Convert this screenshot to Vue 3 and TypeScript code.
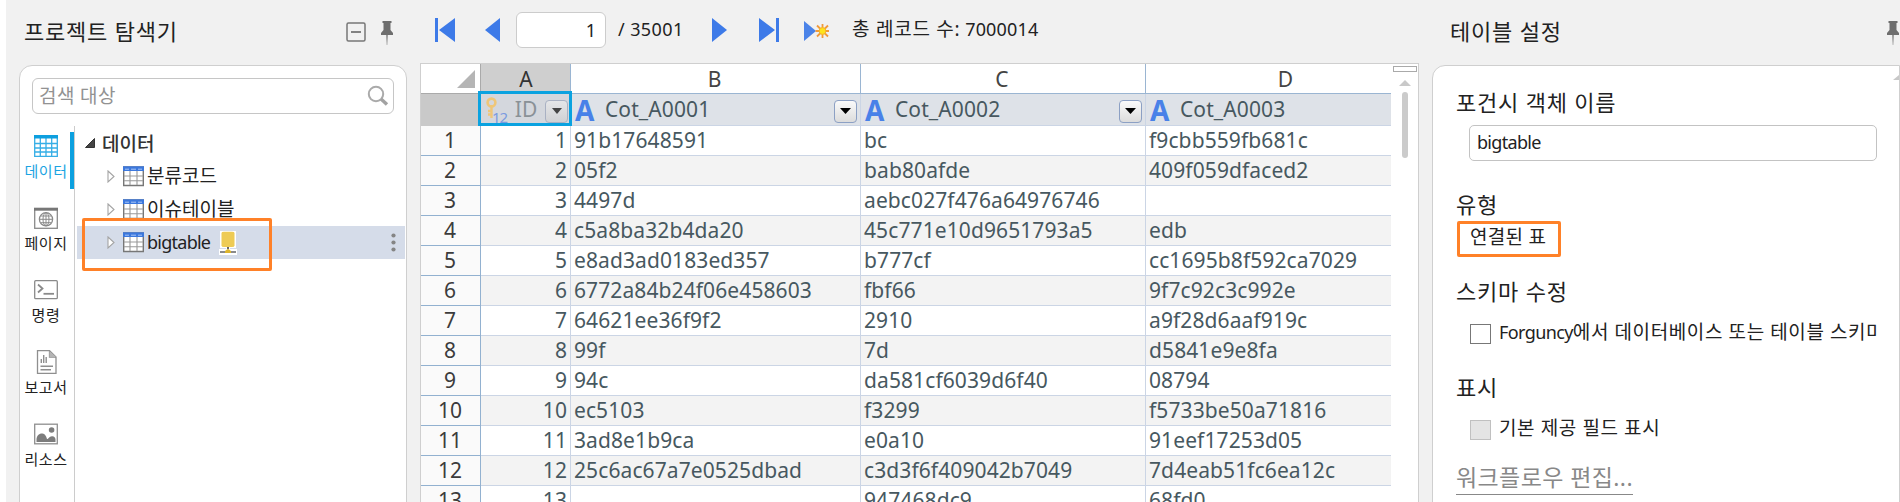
<script setup lang="ts">
interface NavItem { key: string; label: string }
interface TreeItem { name: string; linked: boolean; latin: boolean }
interface GridRow { n: number; b: string; c: string; d: string }

const navItems: NavItem[] = [
  { key: 'data', label: '데이터' },
  { key: 'page', label: '페이지' },
  { key: 'command', label: '명령' },
  { key: 'report', label: '보고서' },
  { key: 'resource', label: '리소스' },
]

const treeItems: TreeItem[] = [
  { name: '분류코드', linked: false, latin: false },
  { name: '이슈테이블', linked: false, latin: false },
  { name: 'bigtable', linked: true, latin: true },
]

const fields: string[] = ['Cot_A0001', 'Cot_A0002', 'Cot_A0003']

const cells: [string, string, string][] = [
  ['91b17648591', 'bc', 'f9cbb559fb681c'],
  ['05f2', 'bab80afde', '409f059dfaced2'],
  ['4497d', 'aebc027f476a64976746', ''],
  ['c5a8ba32b4da20', '45c771e10d9651793a5', 'edb'],
  ['e8ad3ad0183ed357', 'b777cf', 'cc1695b8f592ca7029'],
  ['6772a84b24f06e458603', 'fbf66', '9f7c92c3c992e'],
  ['64621ee36f9f2', '2910', 'a9f28d6aaf919c'],
  ['99f', '7d', 'd5841e9e8fa'],
  ['94c', 'da581cf6039d6f40', '08794'],
  ['ec5103', 'f3299', 'f5733be50a71816'],
  ['3ad8e1b9ca', 'e0a10', '91eef17253d05'],
  ['25c6ac67a7e0525dbad', 'c3d3f6f409042b7049', '7d4eab51fc6ea12c'],
  ['', '947468dc9', '68fd0'],
]
const rows: GridRow[] = cells.map(([b, c, d], i) => ({ n: i + 1, b, c, d }))
</script>

<template>
  <div class="app">
    <aside class="explorer">
      <header class="panel-head">
        <h2>프로젝트 탐색기</h2>
        <svg class="collapse" width="20" height="20" viewBox="0 0 20 20"><rect x="1" y="1" width="18" height="18" rx="1.5" fill="none" stroke="#777" stroke-width="1.5" /><path d="M5 10H15" stroke="#666" stroke-width="1.6" /></svg>
        <svg class="pin" width="12" height="24" viewBox="0 0 12 24"><path d="M1.5 0H10.5V2H9.5V9L12 12V14H0V12L2.5 9V2H1.5Z" fill="#6e6e6e" /><path d="M5 14H7L6.3 24H5.7Z" fill="#999" /></svg>
      </header>
      <div class="explorer-card">
        <div class="search">
          <span>검색 대상</span>
          <svg width="22" height="22" viewBox="0 0 22 22" fill="none"><circle cx="9" cy="9" r="7.2" stroke="#aaa" stroke-width="2" /><path d="M14 14L20 19.5" stroke="#a2a2a2" stroke-width="3.4" /></svg>
        </div>
        <div class="explorer-body">
          <nav class="nav">
            <div v-for="item in navItems" :key="item.key" class="nav-item" :class="{ active: item.key === 'data' }">
              <svg width="24" height="24" viewBox="0 0 24 24" fill="none">
                <g v-if="item.key === 'data'">
                  <path d="M.7 2H23.3V22.3H.7ZM6.3 4V22M12 4V22M17.7 4V22M1 9.5H23M1 14H23M1 18H23" stroke="#35aee6" stroke-width="1.3" />
                  <path d="M0 1H24V4.5H0Z" fill="#0d9fdf" />
                </g>
                <g v-else-if="item.key === 'page'" stroke="#8a8a8a">
                  <rect x=".7" y="2.7" width="22.6" height="19.6" stroke-width="1.3" />
                  <path d="M0 3.2H24" stroke-width="3" stroke="#777" />
                  <circle cx="12" cy="13.3" r="6.6" stroke-width="1.3" />
                  <ellipse cx="12" cy="13.3" rx="3" ry="6.6" />
                  <path d="M12 7V20M5.5 13.3H18.5M7 10H17M7 16.7H17" />
                </g>
                <g v-else-if="item.key === 'command'" stroke="#8a8a8a">
                  <rect x=".7" y="2.7" width="22.6" height="18" rx="1" stroke-width="1.3" />
                  <path d="M4 6.5L8.5 10.5L4 14.5" stroke-width="1.8" />
                  <path d="M9.5 15.8H20" stroke-width="1.8" />
                </g>
                <g v-else-if="item.key === 'report'" stroke="#8f8f8f">
                  <path d="M3.5.7H15.5L22 7V23.3H3.5ZM15.5.7V7H22" stroke-width="1.3" />
                  <path d="M15.5 1L22 7H15.5Z" fill="#b5b5b5" stroke="none" />
                  <path d="M7.3 13V9M9.7 13V5M12.2 13V7M6.5 16.3H19M6.5 19.8H17" stroke-width="1.4" />
                </g>
                <g v-else>
                  <rect x=".7" y="2.2" width="22.6" height="19.6" stroke="#8f8f8f" stroke-width="1.3" />
                  <circle cx="17.6" cy="8" r="2.8" fill="#7c7c7c" />
                  <path d="M2.5 20V17C3 13 6 11.3 8.5 11.6C11 12 12 14 13 17C14.5 17 15 14.5 18 14.2C20 14 21.5 15.5 21.5 17.5V20Z" fill="#7c7c7c" />
                </g>
              </svg>
              <span>{{ item.label }}</span>
            </div>
          </nav>
          <div class="tree">
            <div class="tree-root">
              <svg width="10" height="10" viewBox="0 0 10 10"><path d="M9.5 .5V9.5H.5Z" fill="#444" stroke="#333" /></svg>
              <strong>데이터</strong>
            </div>
            <div v-for="t in treeItems" :key="t.name" class="tree-row" :class="{ selected: t.linked }">
              <svg class="arrow" width="8" height="13" viewBox="0 0 8 13"><path d="M1 1L7 6.5L1 12Z" fill="#fff" stroke="#a4a4a4" stroke-width="1.1" /></svg>
              <svg class="table-icon" width="21" height="21" viewBox="0 0 21 21" fill="none">
                <path d="M.7 1H20.3V19.5H.7Z" fill="#fff" stroke="#777" stroke-width="1.4" />
                <path d="M7 5V19M14 5V19M1 10H20M1 14.7H20" stroke="#999" stroke-width="1.1" />
                <path d="M0 .3H21V5H0Z" fill="#3c78dd" /><path d="M2 3.2H6M8 3.2H13M15 3.2H19" stroke="#a9c6f5" />
              </svg>
              <span class="tree-name" :class="{ latin: t.latin }">{{ t.name }}</span>
              <svg v-if="t.linked" class="db" width="18" height="24" viewBox="0 0 18 24">
                <path d="M1 0H17V17H11V18H18V24H0V18H7V17H1Z" fill="#fff" />
                <path d="M2.5 2Q2.5 .7 5 .7H13Q15.500 .7 15.500 2V14.500Q15.500 16 13 16H5Q2.500 16 2.500 14.500Z" fill="#eecb55" />
                <path d="M8 16H10V18H8Z" fill="#666" /><path d="M1 21H6M12 21H17" stroke="#8a8a8a" stroke-width="2" /><path d="M6 22V20L9 17.800L12 20V22Z" fill="#ddb52e" />
              </svg>
              <svg v-if="t.linked" class="more" width="5" height="19" viewBox="0 0 5 19" fill="#858585"><circle cx="2.500" cy="2.500" r="2.100" /><circle cx="2.500" cy="9.500" r="2.100" /><circle cx="2.500" cy="16.500" r="2.100" /></svg>
              <i v-if="t.linked" class="mark tree-mark"></i>
            </div>
          </div>
        </div>
      </div>
    </aside>

    <main class="center">
      <div class="toolbar">
        <svg class="first" width="20" height="24" viewBox="0 0 20 24" fill="#3d7ae8"><path d="M0 0H3V24H0ZM20 0V24L4 12Z" /></svg>
        <svg class="prev" width="15" height="24" viewBox="0 0 15 24" fill="#3d7ae8"><path d="M15 0V24L0 12Z" /></svg>
        <div class="page-box">1</div>
        <span class="page-total">/ 35001</span>
        <svg class="next" width="15" height="24" viewBox="0 0 15 24" fill="#3d7ae8"><path d="M0 0V24L15 12Z" /></svg>
        <svg class="last" width="20" height="24" viewBox="0 0 20 24" fill="#3d7ae8"><path d="M0 0L16 12L0 24ZM17 0H20V24H17Z" /></svg>
        <svg class="new" width="26" height="20" viewBox="0 0 26 20">
          <path d="M0 0L12 10L0 20Z" fill="#4b83e8" />
          <path d="M18.500 3V17M11.500 10H25M13 4.500L24 15.500M24 4.500L13 15.500" stroke="#f29a3a" stroke-width="1.800" />
          <circle cx="18.500" cy="10" r="3.400" fill="#ffe41c" stroke="#f5b32c" />
        </svg>
        <span class="record-count"><span class="ko">총 레코드 수:</span> <span>7000014</span></span>
      </div>

      <div class="sheet">
        <div class="sheet-grid">
          <div class="line letters">
            <div class="rh"><svg width="18" height="18" viewBox="0 0 18 18"><path d="M18 0V18H0Z" fill="#b5b5b5" /></svg></div>
            <div class="ca sel">A</div><div class="cb">B</div><div class="cc">C</div><div class="cd">D</div>
          </div>
          <div class="line fields">
            <div class="rh"></div>
            <div class="ca id-cell">
              <svg class="key" width="20" height="28" viewBox="0 0 20 28" fill="none">
                <circle cx="5.500" cy="5.500" r="3.900" stroke="#efc678" stroke-width="2.600" />
                <path d="M5.500 9.500V21M5.500 14H2M5.500 17.500H2" stroke="#efc678" stroke-width="2.400" />
              </svg>
              <span class="twelve">12</span>
              <span class="id-name">ID</span>
              <span class="drop dim"><svg width="10" height="6" viewBox="0 0 10 6"><path d="M0 0H10L5 6Z" fill="#444" /></svg></span>
              <i class="cursor"></i>
            </div>
            <div v-for="(f, i) in fields" :key="f" :class="['cb', 'cc', 'cd'][i]">
              <b class="type">A</b><span class="field-name">{{ f }}</span>
              <span v-if="i < 2" class="drop"><svg width="11" height="6" viewBox="0 0 11 6"><path d="M0 0H11L5.500 6Z" fill="#000" /></svg></span>
            </div>
          </div>
          <div v-for="r in rows" :key="r.n" class="line data" :class="{ alt: r.n % 2 === 0 }">
            <div class="rh">{{ r.n }}</div>
            <div class="ca">{{ r.n }}</div>
            <div class="cb">{{ r.b }}</div>
            <div class="cc">{{ r.c }}</div>
            <div class="cd">{{ r.d }}</div>
          </div>
        </div>
        <div class="scroll">
          <i class="split"></i>
          <svg width="12" height="6" viewBox="0 0 12 6"><path d="M6 0L12 6H0Z" fill="#c9c9c9" /></svg>
          <i class="thumb"></i>
        </div>
      </div>
    </main>

    <aside class="settings">
      <header class="panel-head">
        <h2>테이블 설정</h2>
        <svg class="pin" width="12" height="24" viewBox="0 0 12 24"><path d="M1.500 0H10.500V2H9.500V9L12 12V14H0V12L2.500 9V2H1.500Z" fill="#6e6e6e" /><path d="M5 14H7L6.300 24H5.700Z" fill="#999" /></svg>
      </header>
      <div class="settings-card">
        <h3>포건시 객체 이름</h3>
        <div class="name-box">bigtable</div>
        <h3 class="kind">유형</h3>
        <div class="kind-value">연결된 표</div>
        <h3 class="schema">스키마 수정</h3>
        <div class="check"><i></i><span><span class="brand">Forguncy</span>에서 데이터베이스 또는 테이블 스키마 수정</span></div>
        <h3 class="display">표시</h3>
        <div class="check disabled"><i></i><span>기본 제공 필드 표시</span></div>
        <a class="workflow">워크플로우 편집...</a>
        <svg class="up" width="6" height="5" viewBox="0 0 6 5"><path d="M6 0V5H0Z" fill="#c8c8c8" /></svg>
      </div>
    </aside>
  </div>
</template>

<style>
body { margin: 0; overflow: hidden; background: #fff; }
</style>

<style scoped>
* { box-sizing: border-box; }
.app {
  width: 1900px; height: 502px; overflow: hidden; display: flex;
  background: #f1f1f1; border-left: 6px solid #fff;
  font-family: "Noto Sans", "Noto Sans CJK KR", sans-serif;
  color: #222; white-space: nowrap;
}
svg { display: block; flex: none; }
h2, h3 { margin: 0; font-weight: 400; font-size: 22px; letter-spacing: .8px; color: #222; }
.panel-head { height: 65px; display: flex; align-items: flex-start; }
.panel-head h2 { line-height: 30px; margin-top: 16px; }

.explorer { width: 414px; padding-left: 13px; flex: none; }
.explorer .panel-head { padding-left: 5px; }
.explorer .panel-head h2 { width: 322px; }
.collapse { margin-top: 22px; }
.explorer .pin { margin: 21px 0 0 15px; }
.explorer-card {
  width: 388px; height: 460px; background: #fff; border: 1px solid #cfcfcf;
  border-radius: 13px 13px 0 0;
}
.search {
  margin: 12px 0 0 12px; width: 362px; height: 36px; border: 1px solid #c6c6c6; border-radius: 6px;
  display: flex; align-items: center; justify-content: space-between; padding: 0 4px 0 6px;
  font-size: 19px; letter-spacing: .4px; color: #929292; line-height: 34px;
}
.explorer-body { display: flex; margin-top: 12px; }
.nav { width: 55px; height: 400px; border-right: 1px solid #ccc; padding-top: 6px; }
.nav-item {
  height: 57px; margin-bottom: 15px; display: flex; flex-direction: column; align-items: center;
  font-size: 15px; line-height: 20px; color: #222; padding: 1px 3px 0 0; letter-spacing: .6px;
}
.nav-item svg { margin-top: 1px; }
.nav-item span { margin-top: 3px; margin-left: 1px; }
.nav-item.active { color: #1ba4e2; border-right: 4px solid #0ca0df; padding-right: 0; padding-left: 1px; }
.tree { flex: 1; padding-left: 2px; }
.tree-root { height: 34px; display: flex; align-items: center; padding-left: 8px; line-height: 34px; }
.tree-root strong { font-weight: 500; font-size: 19px; margin-left: 7px; color: #333; font-family: "Noto Sans CJK KR", sans-serif; }
.tree-row { position: relative; width: 328px; height: 33px; display: flex; align-items: center; padding-left: 30px; }
.tree-row.selected { background: #d5dce9; }
.table-icon { margin-left: 8px; }
.tree-name { font-size: 19px; line-height: 33px; margin-left: 3px; color: #222; }
.tree-name.latin { font-size: 18px; letter-spacing: -.75px; }
.db { margin-left: 9px; }
.more { margin-left: auto; margin-right: 9px; }
.mark { position: absolute; border: 3px solid #ff8128; border-radius: 2px; }
.tree-mark { left: 5px; top: -8px; width: 190px; height: 53px; }

.center { width: 999px; flex: none; }
.toolbar { height: 63px; display: flex; align-items: flex-start; font-size: 18px; line-height: 30px; }
.toolbar .first { margin: 18px 0 0 15px; }
.toolbar .prev { margin: 18px 0 0 30px; }
.page-box {
  width: 90px; height: 36px; margin: 12px 0 0 16px; padding-right: 9px; background: #fff;
  border: 1px solid #ccc; border-radius: 6px; text-align: right; line-height: 35px;
}
.page-total { margin: 14px 0 0 12px; width: 94px; letter-spacing: .4px; }
.toolbar .next { margin-top: 18px; }
.toolbar .last { margin: 18px 0 0 32px; }
.toolbar .new { margin: 21px 0 0 25px; }
.record-count { margin: 14px 0 0 22px; letter-spacing: .15px; }
.record-count .ko { font-size: 19px; letter-spacing: .75px; }

.sheet { height: 450px; border: 1px solid #cfcfcf; background: #fff; display: flex; }
.sheet-grid { width: 970px; overflow: hidden; font-size: 21px; letter-spacing: .1px; color: #475860; }
.line { display: flex; height: 30px; width: 1010px; }
.line > div { flex: none; border-bottom: 1px solid #cbd5e5; border-right: 1px solid #cbd5e5; line-height: 29px; }
.line > .rh { width: 60px; border-color: #92b1d0; text-align: center; padding-right: 1px; color: #3c3c3c; background: #fafafa; }
.line > .ca { width: 90px; }
.line > .cb { width: 290px; }
.line > .cc { width: 285px; }
.line > .cd { width: 285px; }
.letters > div { text-align: center; color: #444; border-color: #9ab5d2; line-height: 30px; padding-right: 2px; }
.letters > .rh { background: #fff; border-color: #aaa; }
.letters > .rh svg { margin: 6px 0 0 36px; }
.letters > .cd { padding-right: 5px; }
.letters > .sel { background: #cfcfcf; color: #333; padding-right: 0; padding-left: 1px; }
.fields, .fields > div { height: 32px; }
.fields > div { display: flex; align-items: center; background: #dee2e8; }
.line.fields > .rh { background: #c9c9c9; border-bottom-color: #c9c9c9; }
.line.fields > .id-cell { position: relative; background: #d4d7dd; padding-left: 5px; }
.key { margin-top: 2px; }
.twelve { font-size: 15px; line-height: 16px; color: #7b9be0; margin: 15px 0 0 -14px; letter-spacing: -1.2px; }
.id-name { color: #8a9197; margin-left: 8px; }
.cursor { position: absolute; left: -3px; top: -3px; width: 94px; height: 35px; border: 3px solid #0aa2e0; }
.drop {
  width: 23px; height: 23px; margin-left: auto; margin-right: 3px; margin-top: 3px;
  border: 1px solid #8ca0c4; border-radius: 4px;
  background: linear-gradient(#fafafa, #dcdcdc); display: flex; align-items: center; justify-content: center;
}
.drop.dim { border-color: #a9b1c3; background: linear-gradient(#e5e6e8, #d0d1d4); margin-right: 2px; }
.type { width: 28px; padding-left: 4px; font-size: 28px; line-height: 30px; font-weight: 700; color: #4981e8; }
.field-name { margin-left: 6px; }
.data.alt > div { background: #f3f3f3; }
.data.alt > .rh { background: #fafafa; }
.data > .ca { text-align: right; padding-right: 3px; }
.data > .cb, .data > .cc, .data > .cd { padding-left: 3px; }
.scroll { flex: 1; display: flex; flex-direction: column; align-items: center; }
.split { width: 24px; height: 6px; margin: 2px 0 8px; border: 1.500px solid #aaa; }
.thumb { width: 6px; height: 66px; margin-top: 6px; border-radius: 3px; background: #cbcbcb; }

.settings { flex: 1; padding-left: 13px; min-width: 0; overflow: hidden; }
.settings .panel-head { padding-left: 18px; }
.settings .panel-head h2 { width: 437px; flex: none; }
.settings .pin { margin-top: 21px; }
.settings-card {
  position: relative; width: 468px; height: 460px; background: #fff; border: 1px solid #cfcfcf;
  border-radius: 13px 0 0 0; padding: 20px 23px 0;
}
.settings-card h3 { line-height: 32px; height: 32px; }
.name-box {
  height: 36px; width: 408px; margin: 7px 0 0 13px; padding-left: 7px; border: 1px solid #c3c3c3; border-radius: 5px;
  font-size: 18px; line-height: 33px; letter-spacing: -.7px;
}
.settings-card .kind { margin-top: 27px; }
.kind-value {
  width: 104px; height: 36px; margin: 1px 0 0 1px; border: 3px solid #ff8128; border-radius: 2px;
  font-size: 19px; letter-spacing: .3px; line-height: 26px; padding-left: 10px;
}
.settings-card .schema { margin-top: 18px; }
.check { display: flex; align-items: center; margin: 10px 0 0 14px; width: 407px; height: 32px; overflow: hidden; font-size: 19px; letter-spacing: .6px; }
.check i { flex: none; width: 21px; height: 20px; border: 1.500px solid #777; margin-right: 8px; margin-top: 1px; }
.check > span { line-height: 30px; margin-top: -3px; }
.check.disabled i { background: #e4e4e4; border-color: #c0c0c0; }
.brand { font-size: 18px; letter-spacing: -.6px; }
.settings-card .display { margin-top: 22px; }
.workflow {
  display: inline-block; margin-top: 16px; height: 34px; line-height: 32px; font-size: 23px; letter-spacing: .4px;
  color: #888; border-bottom: 1.500px solid #888;
}
.up { position: absolute; right: 0; top: 9px; }
</style>
